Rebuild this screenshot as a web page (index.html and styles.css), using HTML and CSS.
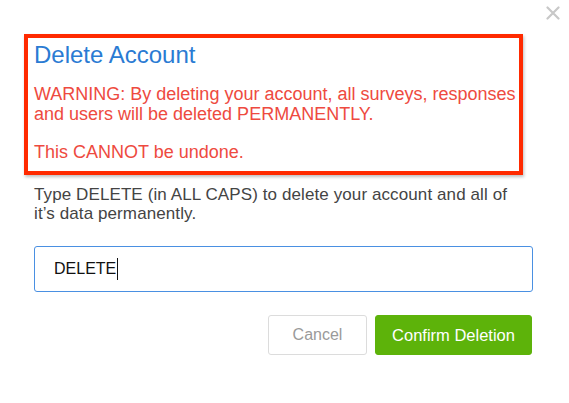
FILE: index.html
```html
<!DOCTYPE html>
<html>
<head>
<meta charset="utf-8">
<link rel="stylesheet" href="styles.css">
</head>
<body>
<div class="modal">
  <button class="close" aria-label="Close">
    <svg width="14" height="14" viewBox="0 0 14 14"><path d="M1.5 1.5 L12.5 12.5 M12.5 1.5 L1.5 12.5" stroke="#c8c8c8" stroke-width="2.2" stroke-linecap="round" fill="none"/></svg>
  </button>
  <div class="alert">
    <h2 class="alert-title">Delete Account</h2>
    <p class="alert-text">WARNING: By deleting your account, all surveys, responses and users will be deleted PERMANENTLY.</p>
    <p class="alert-text">This CANNOT be undone.</p>
  </div>
  <p class="instructions">Type DELETE (in ALL CAPS) to delete your account and all of it’s data permanently.</p>
  <div class="field"><span class="field-value">DELETE</span><span class="caret"></span></div>
  <div class="actions">
    <button class="btn btn-cancel">Cancel</button>
    <button class="btn btn-confirm">Confirm Deletion</button>
  </div>
</div>
</body>
</html>
```

FILE: styles.css
```css
html, body {
  margin: 0;
  padding: 0;
  background: #fff;
}
body {
  font-family: "Liberation Sans", Arial, sans-serif;
  width: 569px;
  height: 403px;
  overflow: hidden;
}
.modal {
  position: relative;
  padding: 34px 36px 0 24px;
}
.close {
  position: absolute;
  top: 6px;
  right: 9px;
  border: 0;
  background: none;
  padding: 0;
  width: 14px;
  height: 14px;
}
.close svg { display: block; }
.alert {
  margin-right: 10px;
  border: 4px solid #ff2a00;
  box-shadow: 1px 2px 3px rgba(0,0,0,0.25);
  padding: 2px 0 0 6px;
  height: 141px;
  box-sizing: border-box;
}
.alert-title {
  margin: 0;
  font-weight: normal;
  font-size: 24px;
  line-height: 30px;
  color: #2a7bd3;
}
.alert-text {
  margin: 14px 0 0;
  font-size: 18px;
  line-height: 20px;
  color: #ee4a40;
}
.alert-text + .alert-text {
  margin-top: 18px;
}
.instructions {
  margin: 10px 0 0 10px;
  max-width: 484px;
  font-size: 17px;
  line-height: 19px;
  letter-spacing: 0.1px;
  color: #444;
}
.field {
  margin: 23px 0 0 10px;
  height: 46px;
  box-sizing: border-box;
  border: 1px solid #4a90e2;
  border-radius: 3px;
  display: flex;
  align-items: center;
  padding-left: 19px;
  font-size: 16px;
  color: #111;
}
.caret {
  display: inline-block;
  width: 1px;
  height: 22px;
  background: #111;
  margin-left: 1px;
}
.actions {
  display: flex;
  justify-content: flex-end;
  gap: 8px;
  margin: 23px 1px 0 0;
}
.btn {
  font-family: inherit;
  font-size: 16px;
  height: 40px;
  border-radius: 3px;
  padding: 0;
}
.btn-cancel {
  width: 99px;
  background: #fff;
  border: 1px solid #dcdcdc;
  color: #9a9a9a;
}
.btn-confirm {
  width: 157px;
  background: #5db30a;
  border: 1px solid #5db30a;
  color: #fff;
  font-size: 16.5px;
}
```
